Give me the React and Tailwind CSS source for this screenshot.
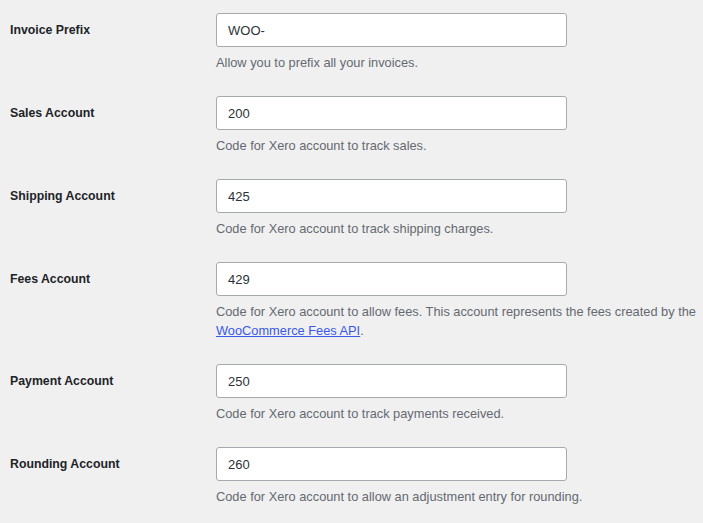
import React from "react";

const rows = [
  { label: "Invoice Prefix", value: "WOO-", desc: "Allow you to prefix all your invoices." },
  { label: "Sales Account", value: "200", desc: "Code for Xero account to track sales." },
  { label: "Shipping Account", value: "425", desc: "Code for Xero account to track shipping charges." },
  {
    label: "Fees Account",
    value: "429",
    desc: (
      <>
        Code for Xero account to allow fees. This account represents the fees created by the{" "}
        <a href="#" className="text-[#3858e9] underline">
          WooCommerce Fees API
        </a>
        .
      </>
    ),
  },
  { label: "Payment Account", value: "250", desc: "Code for Xero account to track payments received." },
  { label: "Rounding Account", value: "260", desc: "Code for Xero account to allow an adjustment entry for rounding." },
];

export default function App() {
  return (
    <div className="min-h-screen bg-[#f0f0f1] font-['Liberation_Sans',Arial,sans-serif]">
      {rows.map((row, idx) => (
        <div key={idx} className="flex items-start">
          {/* label column */}
          <div className="w-[216px] shrink-0 pl-[10px] pt-[21px] text-[12.3px] leading-[18px] font-bold text-[#1d2327]">
            {row.label}
          </div>
          {/* field column */}
          <div className="flex-1 pt-[13px] pb-[11px] pr-[2px]">
            <input
              type="text"
              defaultValue={row.value}
              className="block h-[34px] w-[351px] rounded-[3px] border border-[#a7aaad] bg-white px-[11px] text-[13px] text-[#2c3338] outline-none"
            />
            <p className="mt-[6px] text-[12.8px] leading-[19px] text-[#646970]">{row.desc}</p>
          </div>
        </div>
      ))}
    </div>
  );
}
